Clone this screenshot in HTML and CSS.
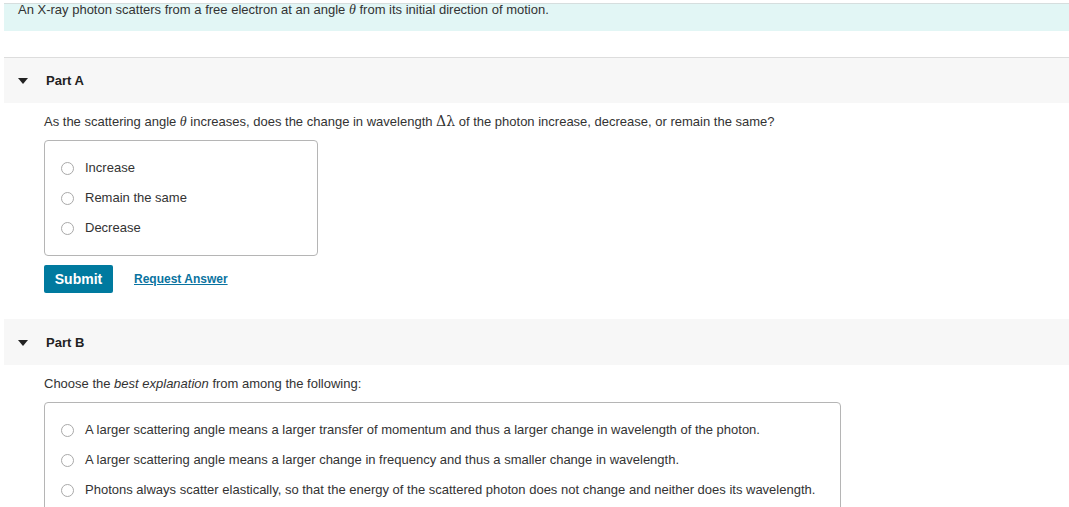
FILE: index.html
```html
<!DOCTYPE html>
<html lang="en">
<head>
  <meta charset="UTF-8">
  <meta name="viewport" content="width=device-width, initial-scale=1.0">
  <title>Compton Scattering</title>
  <link rel="stylesheet" href="styles.css">
</head>
<body>

  <div class="intro">
    <p>An X-ray photon scatters from a free electron at an angle <i class="math">&theta;</i> from its initial direction of motion.</p>
  </div>

  <!-- Part A -->
  <section class="part first">
    <div class="part-header">
      <span class="caret"></span>
      <h2>Part A</h2>
    </div>
    <div class="part-body">
      <p class="question">As the scattering angle <i class="math">&theta;</i> increases, does the change in wavelength <span class="math-up">&Delta;&lambda;</span> of the photon increase, decrease, or remain the same?</p>

      <div class="choices">
        <label class="choice"><input type="radio" name="partA"> <span>Increase</span></label>
        <label class="choice"><input type="radio" name="partA"> <span>Remain the same</span></label>
        <label class="choice"><input type="radio" name="partA"> <span>Decrease</span></label>
      </div>

      <div class="actions">
        <button class="submit">Submit</button>
        <a href="#" class="request">Request Answer</a>
      </div>
    </div>
  </section>

  <!-- Part B -->
  <section class="part">
    <div class="part-header">
      <span class="caret"></span>
      <h2>Part B</h2>
    </div>
    <div class="part-body">
      <p class="question b">Choose the <i>best explanation</i> from among the following:</p>

      <div class="choices">
        <label class="choice"><input type="radio" name="partB"> <span>A larger scattering angle means a larger transfer of momentum and thus a larger change in wavelength of the photon.</span></label>
        <label class="choice"><input type="radio" name="partB"> <span>A larger scattering angle means a larger change in frequency and thus a smaller change in wavelength.</span></label>
        <label class="choice"><input type="radio" name="partB"> <span>Photons always scatter elastically, so that the energy of the scattered photon does not change and neither does its wavelength.</span></label>
      </div>
    </div>
  </section>

</body>
</html>
```

FILE: styles.css
```css
* {
  margin: 0;
  padding: 0;
  box-sizing: border-box;
}

body {
  font-family: "Liberation Sans", Arial, sans-serif;
  font-size: 13px;
  color: #333;
  background-color: #fff;
  padding-left: 4px;
  overflow: hidden;
}

.math {
  font-family: "Liberation Serif", "Times New Roman", serif;
  font-size: 14px;
}

.math-up {
  font-family: "DejaVu Serif", "Liberation Serif", serif;
  font-size: 14px;
  color: #333;
}

/* bandeau d'introduction */
.intro {
  margin-top: 3px;
  height: 28px;
  background-color: #e2f6f5;
  border-top: 1px solid #d6dede;
  padding-left: 14px;
}

.intro p {
  line-height: 13px;
  margin-top: -1px;
}

.part.first {
  margin-top: 26px;
}

.part-header {
  height: 46px;
  background-color: #f7f7f7;
  display: flex;
  align-items: center;
  padding-left: 14px;
}

.part.first .part-header {
  border-top: 1px solid #ddd;
}

.caret {
  width: 0;
  height: 0;
  border-left: 5px solid transparent;
  border-right: 5px solid transparent;
  border-top: 6px solid #222;
  margin-right: 18px;
  margin-top: 1px;
}

.part-header h2 {
  font-size: 13px;
  font-weight: bold;
  color: #222;
}

.part-body {
  padding-left: 40px;
}

.question {
  line-height: 20px;
  padding-top: 8px;
  margin-bottom: 8px;
}

.question.b {
  padding-top: 9px;
}

.choices {
  display: inline-flex;
  flex-direction: column;
  min-width: 274px;
  padding: 12px 25px 12px 16px;
  border: 1px solid #b5b5b5;
  border-radius: 4px;
}

.choice {
  display: flex;
  align-items: center;
  height: 30px;
  line-height: 30px;
}

.choice input {
  appearance: none;
  -webkit-appearance: none;
  width: 13px;
  height: 13px;
  border: 1px solid #a9a9a9;
  border-radius: 50%;
  background-color: #fff;
  margin-right: 11px;
}

.actions {
  display: flex;
  align-items: center;
  margin-top: 9px;
  margin-bottom: 26px;
}

.submit {
  width: 69px;
  height: 28px;
  background-color: #007a9f;
  color: #fff;
  border: none;
  border-radius: 2px;
  font-family: "Liberation Sans", Arial, sans-serif;
  font-size: 14px;
  font-weight: bold;
  cursor: pointer;
}

.request {
  margin-left: 21px;
  font-size: 12px;
  font-weight: bold;
  color: #0a73a0;
  text-decoration: underline;
}
```
